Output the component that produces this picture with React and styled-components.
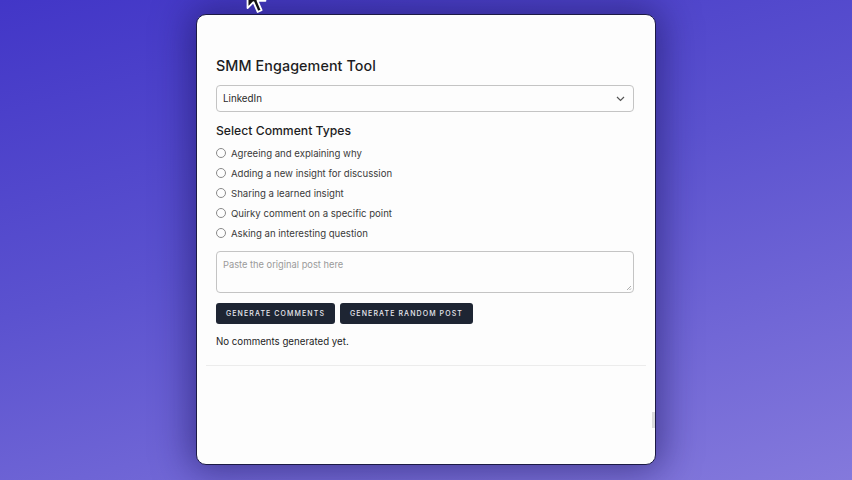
import React from "react";
import styled, { createGlobalStyle } from "styled-components";

const Global = createGlobalStyle`
  html, body { margin: 0; padding: 0; }
  body {
    width: 852px; height: 480px; overflow: hidden;
    background: linear-gradient(165deg, #4236c7 0%, #5b52cf 45%, #8479dc 100%);
    font-family: Inter, "Open Sans", sans-serif;
  }
`;

const Stage = styled.div`
  position: relative;
  width: 852px;
  height: 480px;
  padding-top: 14px;
  box-sizing: border-box;
`;

const Card = styled.div`
  width: 460px;
  height: 451px;
  margin: 0 auto;
  box-sizing: border-box;
  background: #fdfdfd;
  border: 1.5px solid #1c1a45;
  border-radius: 10px;
  box-shadow: 0 0 36px 6px rgba(25, 18, 90, 0.55);
  padding: 41px 21px 0 19px;
  display: flex;
  flex-direction: column;
  position: relative;
`;

const Title = styled.h1`
  margin: 0;
  font-size: 14.3px;
  line-height: 20px;
  font-weight: 500;
  color: #1d1d1f;
  letter-spacing: 0.1px;
`;

const SelectBox = styled.div`
  margin-top: 9px;
  height: 27px;
  border: 1px solid #c4c4c4;
  border-radius: 4px;
  box-sizing: border-box;
  display: flex;
  align-items: center;
  justify-content: space-between;
  padding: 0 8px 0 6px;
  font-size: 9.8px;
  color: #2a2a2a;
`;

const SubTitle = styled.h2`
  margin: 10px 0 3px;
  font-size: 12.2px;
  line-height: 18px;
  font-weight: 500;
  color: #1d1d1f;
`;

const Options = styled.div`
  display: flex;
  flex-direction: column;
`;

const Option = styled.label`
  display: flex;
  align-items: center;
  height: 20px;
  gap: 5px;
  font-size: 9.6px;
  color: #3a3a3a;
`;

const Radio = styled.span`
  width: 10px;
  height: 10px;
  border-radius: 50%;
  border: 1px solid #8a8a8a;
  box-sizing: border-box;
  flex: none;
`;

const TextArea = styled.div`
  position: relative;
  margin-top: 8px;
  height: 42px;
  border: 1px solid #c4c4c4;
  border-radius: 4px;
  box-sizing: border-box;
  padding: 7px 6px;
  font-size: 9.3px;
  color: #9a9a9a;
`;

const Grip = styled.svg`
  position: absolute;
  right: 1px;
  bottom: 1px;
`;

const ButtonRow = styled.div`
  margin-top: 10px;
  display: flex;
  gap: 5px;
`;

const Button = styled.button`
  height: 21px;
  width: ${(p) => p.$w}px;
  border: none;
  border-radius: 3px;
  background: #1e2533;
  color: #e8e8ee;
  font-family: Inter, sans-serif;
  font-size: 7px;
  font-weight: 500;
  letter-spacing: 1.1px;
  text-transform: uppercase;
  padding: 0;
`;

const Status = styled.p`
  margin: 10px 0 0;
  font-size: 9.7px;
  line-height: 16px;
  color: #1d1d1f;
`;

const Divider = styled.hr`
  margin: 15px -12px 0 -10px;
  border: none;
  border-top: 1px solid #ececec;
`;

const ScrollNub = styled.div`
  position: absolute;
  right: 0;
  top: 397px;
  width: 3px;
  height: 16px;
  background: #dcdcdc;
`;

const Cursor = styled.svg`
  position: absolute;
  left: 243px;
  top: -20px;
`;

const options = [
  "Agreeing and explaining why",
  "Adding a new insight for discussion",
  "Sharing a learned insight",
  "Quirky comment on a specific point",
  "Asking an interesting question",
];

export default function App() {
  return (
    <>
      <Global />
      <Stage>
        <Card>
          <Title>SMM Engagement Tool</Title>
          <SelectBox>
            <span>LinkedIn</span>
            <svg width="9" height="6" viewBox="0 0 9 6">
              <path d="M1 1l3.5 3.5L8 1" fill="none" stroke="#555" strokeWidth="1.2" />
            </svg>
          </SelectBox>
          <SubTitle>Select Comment Types</SubTitle>
          <Options>
            {options.map((o) => (
              <Option key={o}>
                <Radio />
                {o}
              </Option>
            ))}
          </Options>
          <TextArea>
            Paste the original post here
            <Grip width="6" height="6" viewBox="0 0 6 6">
              <path d="M5 1L1 5M5 3.5L3.5 5" stroke="#999" strokeWidth="0.8" />
            </Grip>
          </TextArea>
          <ButtonRow>
            <Button $w={119}>Generate Comments</Button>
            <Button $w={133}>Generate Random Post</Button>
          </ButtonRow>
          <Status>No comments generated yet.</Status>
          <Divider />
          <ScrollNub />
        </Card>
        <Cursor width="24" height="36" viewBox="-1 -1 13 22">
          <path
            d="M1 1 L1 17 L4.8 13.2 L7.5 19.5 L10 18.4 L7.4 12.3 L12.5 12.3 Z"
            transform="translate(0 0) scale(0.95)"
            fill="#111"
            stroke="#fff"
            strokeWidth="1.2"
            strokeLinejoin="round"
          />
        </Cursor>
      </Stage>
    </>
  );
}
